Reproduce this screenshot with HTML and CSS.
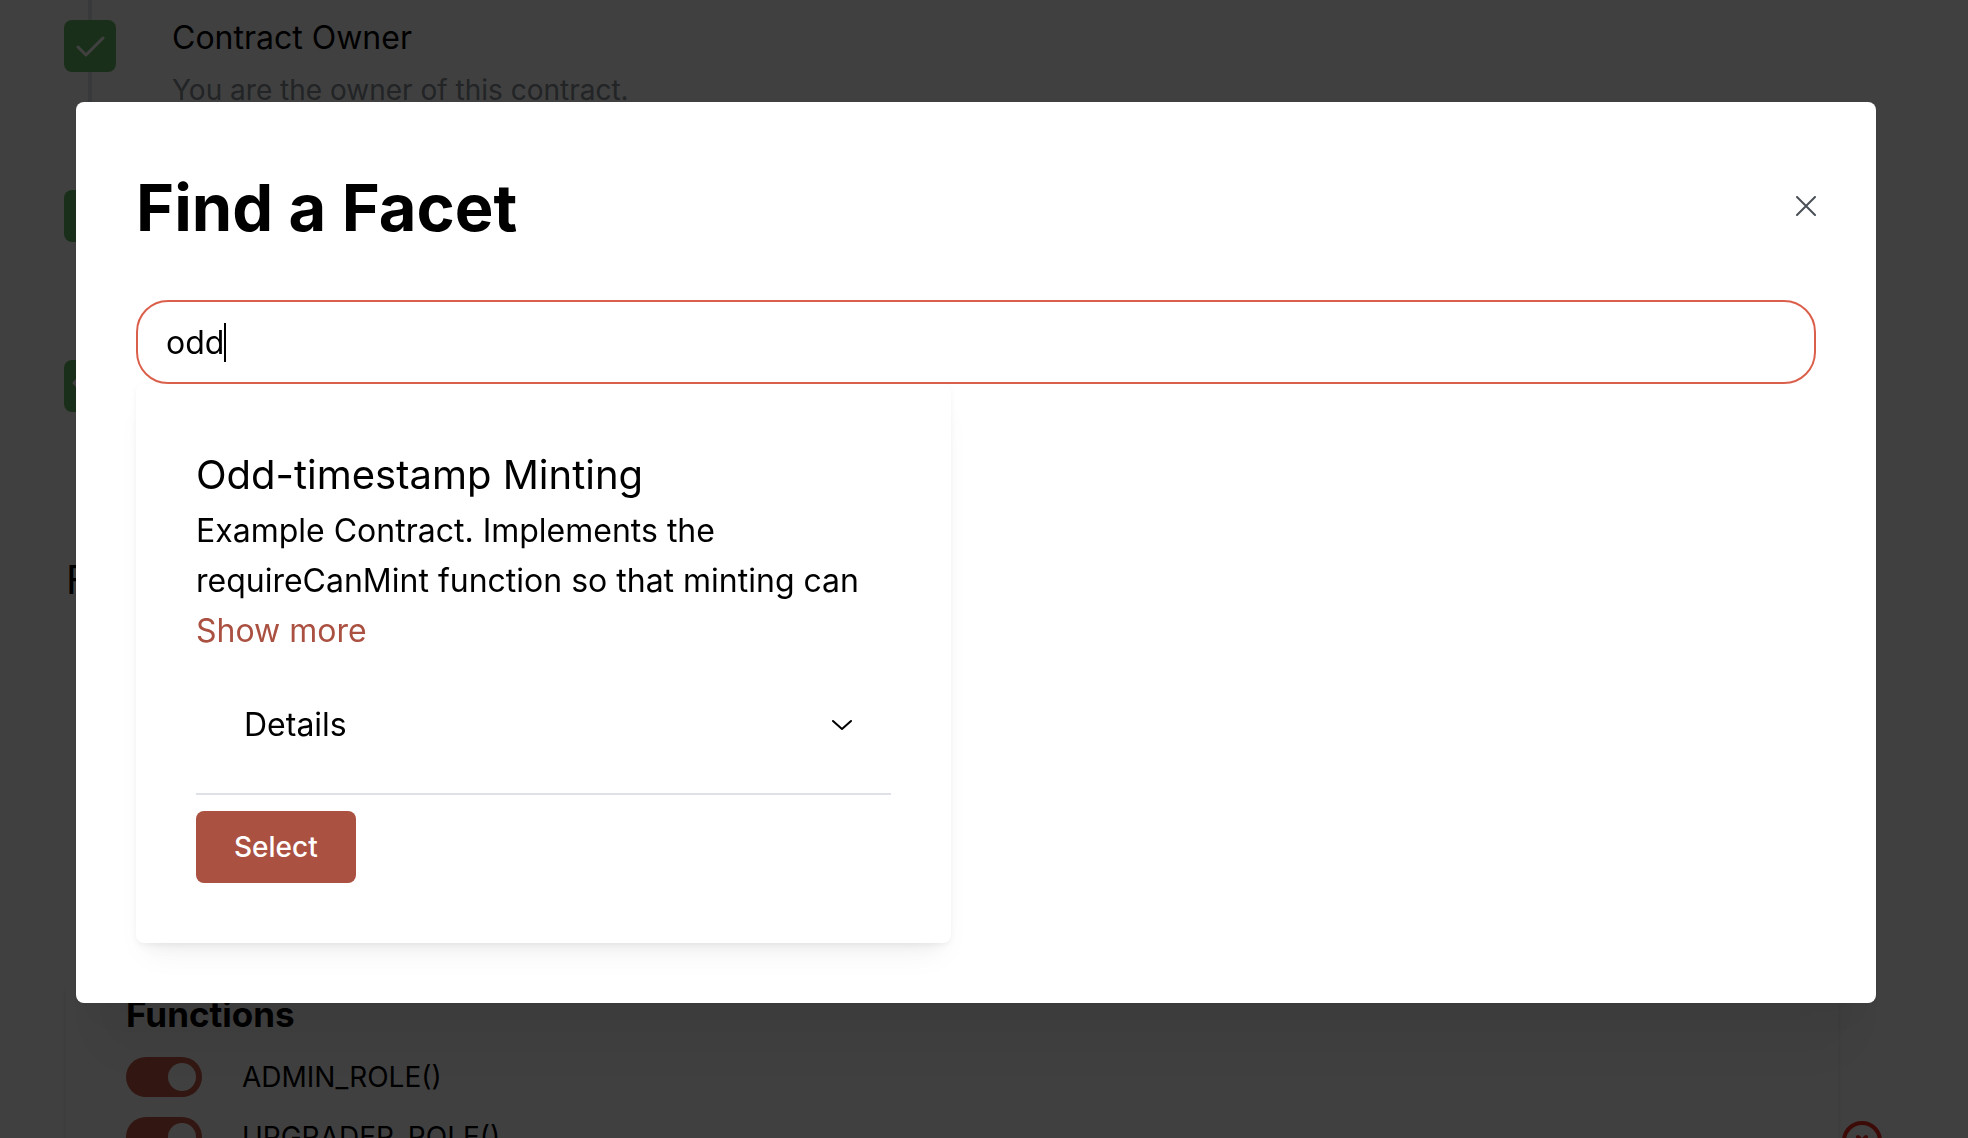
FILE: index.html
```html
<!DOCTYPE html>
<html lang="en">
<head>
<meta charset="utf-8">
<meta name="viewport" content="width=device-width, initial-scale=1">
<title>Find a Facet</title>
<link rel="stylesheet" href="styles.css">
</head>
<body>
<main class="page">
  <ol class="timeline">
    <li class="step">
      <span class="bullet"><svg viewBox="0 0 52 52" aria-hidden="true"><path d="M14 27l8 8 17-17"/></svg></span>
      <div><h3 class="step-title">Contract Owner</h3><p class="step-text">You are the owner of this contract.</p></div>
    </li>
    <li class="step">
      <span class="bullet"><svg viewBox="0 0 52 52" aria-hidden="true"><path d="M14 27l8 8 17-17"/></svg></span>
    </li>
    <li class="step">
      <span class="bullet"><svg viewBox="0 0 52 52" aria-hidden="true"><path d="M17 16l-7 7 7 7M35 16l7 7-7 7"/></svg></span>
    </li>
  </ol>
  <h2 class="section-title">Facets</h2>
  <section class="panel">
    <h3 class="panel-title">Functions</h3>
    <label class="switch-row"><input class="switch" type="checkbox" role="switch" checked><span>ADMIN_ROLE()</span></label>
    <label class="switch-row"><input class="switch" type="checkbox" role="switch" checked><span>UPGRADER_ROLE()</span></label>
    <button class="remove" type="button" aria-label="Remove facet"><svg viewBox="0 0 40 40" aria-hidden="true"><circle cx="20" cy="20" r="18"/><path d="M16 16l8 8M24 16l-8 8"/></svg></button>
  </section>
</main>
<div class="overlay">
  <div class="modal" role="dialog" aria-modal="true" aria-labelledby="modal-title">
    <header class="modal-header">
      <h1 class="modal-title" id="modal-title">Find a Facet</h1>
      <button class="close" type="button" aria-label="Close"><svg viewBox="0 0 20 20" aria-hidden="true"><path d="M1 1l18 18M19 1L1 19"/></svg></button>
    </header>
    <div class="search">
      <input class="search-input" type="text" value="odd" aria-label="Search facets">
      <span class="caret" aria-hidden="true"></span>
    </div>
    <div class="results">
      <article class="card">
        <h2 class="card-title">Odd-timestamp Minting</h2>
        <p class="card-text">Example Contract. Implements the requireCanMint function so that minting can</p>
        <a class="more" href="#more">Show more</a>
        <button class="details" type="button" aria-expanded="false"><span>Details</span><svg viewBox="0 0 20 12" aria-hidden="true"><path d="M1 2l9 8 9-8"/></svg></button>
        <button class="select" type="button">Select</button>
      </article>
    </div>
  </div>
</div>
</body>
</html>
```
FILE: styles.css
```css
*, *::before, *::after { box-sizing: border-box; }
body, h1, h2, h3, p, ol { margin: 0; padding: 0; }
body {
  height: 100vh;
  overflow: hidden;
  background: #fff;
  color: #000;
  font: 400 32px/50px Inter, "Liberation Sans", sans-serif;
}
button, input { font: inherit; color: inherit; }
button { border: 0; background: none; cursor: pointer; padding: 0; }
svg { display: block; fill: none; stroke: currentColor; stroke-linecap: round; stroke-linejoin: round; }

.page { height: 100vh; overflow: hidden; padding: 0 130px 0 64px; }
.timeline { list-style: none; }
.step {
  display: flex;
  gap: 56px;
  height: 170px;
  padding-top: 20px;
  background: linear-gradient(#dee2e6, #dee2e6) 24px 0 / 4px 100% no-repeat;
}
.step:last-child { background-size: 4px 20px; }
.bullet { flex: none; width: 52px; height: 52px; border-radius: 8px; background: #69bb69; color: #fff; }
.bullet svg { stroke-width: 3px; }
.step-title { font-size: 32px; font-weight: 400; line-height: 36px; }
.step-text { margin-top: 12px; font-size: 28px; line-height: 44px; color: #868e96; }
.section-title { margin: 39px 0 0 2px; font-size: 40px; font-weight: 400; line-height: 62px; }
.panel { position: relative; margin: 376px 0 0 2px; padding: 0 60px; box-shadow: 0 2px 6px rgba(0, 0, 0, .1); }
.panel-title { margin-bottom: 6px; font-size: 35px; font-weight: 700; line-height: 54px; }
.switch-row { display: flex; align-items: center; gap: 40px; height: 60px; font-size: 28px; }
.switch { appearance: none; flex: none; display: flex; align-items: center; justify-content: flex-end; width: 76px; height: 40px; margin: 0; padding: 6px; border-radius: 20px; background: #c85845; }
.switch::before { content: ""; width: 28px; height: 28px; border-radius: 50%; background: #fff; }
.remove { position: absolute; right: -44px; bottom: 6px; width: 40px; height: 40px; color: #f02c20; }
.remove svg { stroke-width: 4px; }

.overlay { position: fixed; inset: 0; padding: 102px 92px 102px 76px; background: rgba(0, 0, 0, .75); }
.modal { padding: 60px; border-radius: 8px; background: #fff; box-shadow: 0 2px 6px rgba(0, 0, 0, .05), 0 72px 56px -14px rgba(0, 0, 0, .05), 0 34px 34px -10px rgba(0, 0, 0, .04); }
.modal-header { display: flex; align-items: center; justify-content: space-between; height: 88px; margin-bottom: 50px; }
.modal-title { padding-top: 4px; font-size: 65px; font-weight: 700; line-height: 84px; }
.close { color: #495057; }
.close svg { width: 20px; height: 20px; stroke-width: 2px; }
.search { position: relative; }
.search-input { display: block; width: 100%; height: 84px; padding: 0 28px; border: 2px solid #db604c; border-radius: 32px; outline: 0; background: #fff; }
.caret { position: absolute; left: 88px; top: 23px; width: 2px; height: 39px; background: #000; }
.results { display: grid; grid-template-columns: 1fr 1fr; gap: 50px; }
.card { display: flex; flex-direction: column; align-items: flex-start; padding: 60px; border-radius: 8px; background: #fff; box-shadow: 0 2px 6px rgba(0, 0, 0, .05), 0 20px 30px -10px rgba(0, 0, 0, .05), 0 14px 14px -10px rgba(0, 0, 0, .04); }
.card-title { font-size: 40px; font-weight: 400; line-height: 62px; }
.more { color: #ab5142; text-decoration: none; }
.details { display: flex; align-items: center; justify-content: space-between; width: 100%; height: 139px; padding: 0 39px 0 48px; border-bottom: 2px solid #dee2e6; }
.details svg { width: 20px; height: 12px; stroke-width: 2px; }
.select { height: 72px; margin-top: 16px; padding: 0 38px; border-radius: 8px; background: #ab5142; color: #fff; font-size: 28px; font-weight: 500; }
```
